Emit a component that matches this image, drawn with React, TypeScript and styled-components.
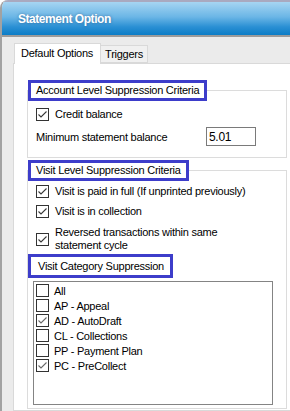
import React from "react";
import styled, { createGlobalStyle } from "styled-components";

const Global = createGlobalStyle`
  html, body { margin: 0; padding: 0; background: #ffffff; overflow: hidden; }
  body { font-family: "Liberation Sans", Arial, sans-serif; font-size: 11px; color: #000; }
`;

const Window = styled.div`
  box-sizing: border-box;
  width: 290px;
  height: 411px;
  display: flex;
  flex-direction: column;
  border-left: 2px solid #a2a2a2;
  border-top-left-radius: 8px;
  overflow: hidden;
  background: #ebebeb;
`;

const TitleBar = styled.div`
  height: 33px;
  flex: 0 0 auto;
  display: flex;
  align-items: center;
  padding-left: 16px;
  border-top: 2px solid #a9a9bf;
  border-bottom: 2px solid #9b9b9b;
  background: linear-gradient(#a6d5f2 0%, #6bb6e6 45%, #2b90d4 75%, #0b7cc6 100%);
  color: #ffffff;
  font-weight: bold;
  font-size: 12px;
  letter-spacing: -0.45px;
  text-shadow: 0 0 3px rgba(20, 60, 110, 0.55);
`;

const Body = styled.div`
  flex: 1 1 auto;
  display: flex;
  flex-direction: column;
  padding: 6px 0 0 11px;
`;

const TabStrip = styled.div`
  display: flex;
  align-items: flex-end;
  padding-left: 1px;
  margin-bottom: -1px;
  position: relative;
  z-index: 1;
`;

const Tab = styled.div<{ $active?: boolean }>`
  box-sizing: border-box;
  height: ${(p) => (p.$active ? "21px" : "18px")};
  display: flex;
  align-items: center;
  padding: ${(p) => (p.$active ? "0 7px 2px 6px" : "0 4px 0 4px")};
  border: 1px solid #d9d9d9;
  border-bottom: ${(p) => (p.$active ? "none" : "1px solid #d9d9d9")};
  background: ${(p) => (p.$active ? "#ffffff" : "#f0f0f0")};
  letter-spacing: -0.25px;
  margin-left: ${(p) => (p.$active ? "0" : "-1px")};
  margin-bottom: ${(p) => (p.$active ? "0" : "1px")};
`;

const Panel = styled.div`
  flex: 1 1 auto;
  background: #ffffff;
  border: 1px solid #d9d9d9;
  border-right: none;
  padding: 16px 3px 0 13px;
  display: flex;
  flex-direction: column;
  gap: 2px;
`;

const Group = styled.fieldset`
  margin: 0;
  padding: 0;
  min-width: 0;
  border: 1px solid #dcdcdc;
`;

const Legend = styled.legend`
  margin: 0;
  padding: 0 5px;
  line-height: 15px;
  border: 3px solid #3d3dca;
  background: #ffffff;
  letter-spacing: -0.25px;
`;

const GroupContent = styled.div<{ $pt: number; $pb: number }>`
  display: flex;
  flex-direction: column;
  padding: ${(p) => `${p.$pt}px 0 ${p.$pb}px 0`};
`;

const CheckRow = styled.label<{ $mt?: number }>`
  display: flex;
  align-items: center;
  gap: 6px;
  padding-left: 8px;
  line-height: 13px;
  letter-spacing: -0.25px;
  margin-top: ${(p) => p.$mt ?? 0}px;
`;

const RowText = styled.span`
  max-width: 200px;
`;

const FieldRow = styled.div`
  display: flex;
  align-items: center;
  padding-left: 8px;
  margin-top: 6px;
  letter-spacing: -0.25px;
`;

const FieldLabel = styled.span`
  flex: 0 0 170px;
`;

const TextInput = styled.div`
  box-sizing: border-box;
  width: 50px;
  height: 19px;
  border: 1px solid #7a7a7a;
  padding: 0 2px;
  display: flex;
  align-items: center;
  font-size: 12px;
  letter-spacing: -0.3px;
`;

const SubLabel = styled.div`
  align-self: flex-start;
  margin-top: 2px;
  padding: 0 6px 0 7px;
  line-height: 18px;
  border: 3px solid #3d3dca;
  letter-spacing: -0.25px;
`;

const ListBox = styled.div`
  box-sizing: border-box;
  margin: 3px 0 0 5px;
  width: 240px;
  height: 124px;
  border: 1px solid #848484;
  padding: 1px 0 0 2px;
  display: flex;
  flex-direction: column;
`;

const ListItem = styled.div`
  height: 15px;
  display: flex;
  align-items: center;
  gap: 5px;
  letter-spacing: -0.25px;
`;

const Box = styled.span`
  box-sizing: border-box;
  flex: 0 0 13px;
  width: 13px;
  height: 13px;
  border: 1px solid #333333;
  background: #ffffff;
  display: inline-flex;
`;

const Check = ({ checked, tone = "#3a3a3a" }: { checked?: boolean; tone?: string }) => (
  <Box>
    {checked && (
      <svg width="11" height="11" viewBox="0 0 11 11">
        <polyline points="1.5,5.5 4,8 9.5,2.5" fill="none" stroke={tone} strokeWidth="1.1" />
      </svg>
    )}
  </Box>
);

const categories: { label: string; checked: boolean }[] = [
  { label: "All", checked: false },
  { label: "AP - Appeal", checked: false },
  { label: "AD - AutoDraft", checked: true },
  { label: "CL - Collections", checked: false },
  { label: "PP - Payment Plan", checked: false },
  { label: "PC - PreCollect", checked: true },
];

export default function App() {
  return (
    <>
      <Global />
      <Window>
        <TitleBar>Statement Option</TitleBar>
        <Body>
          <TabStrip>
            <Tab $active>Default Options</Tab>
            <Tab>Triggers</Tab>
          </TabStrip>
          <Panel>
            <Group>
              <Legend>Account Level Suppression Criteria</Legend>
              <GroupContent $pt={7} $pb={11}>
                <CheckRow>
                  <Check checked />
                  <RowText>Credit balance</RowText>
                </CheckRow>
                <FieldRow>
                  <FieldLabel>Minimum statement balance</FieldLabel>
                  <TextInput>5.01</TextInput>
                </FieldRow>
              </GroupContent>
            </Group>
            <Group>
              <Legend>Visit Level Suppression Criteria</Legend>
              <GroupContent $pt={4} $pb={3}>
                <CheckRow>
                  <Check checked />
                  <span>Visit is paid in full (If unprinted previously)</span>
                </CheckRow>
                <CheckRow $mt={7}>
                  <Check checked />
                  <span>Visit is in collection</span>
                </CheckRow>
                <CheckRow $mt={8}>
                  <Check checked />
                  <RowText>Reversed transactions within same statement cycle</RowText>
                </CheckRow>
                <SubLabel>Visit Category Suppression</SubLabel>
                <ListBox>
                  {categories.map((c) => (
                    <ListItem key={c.label}>
                      <Check checked={c.checked} tone="#6a6a6a" />
                      <span>{c.label}</span>
                    </ListItem>
                  ))}
                </ListBox>
              </GroupContent>
            </Group>
          </Panel>
        </Body>
      </Window>
    </>
  );
}
